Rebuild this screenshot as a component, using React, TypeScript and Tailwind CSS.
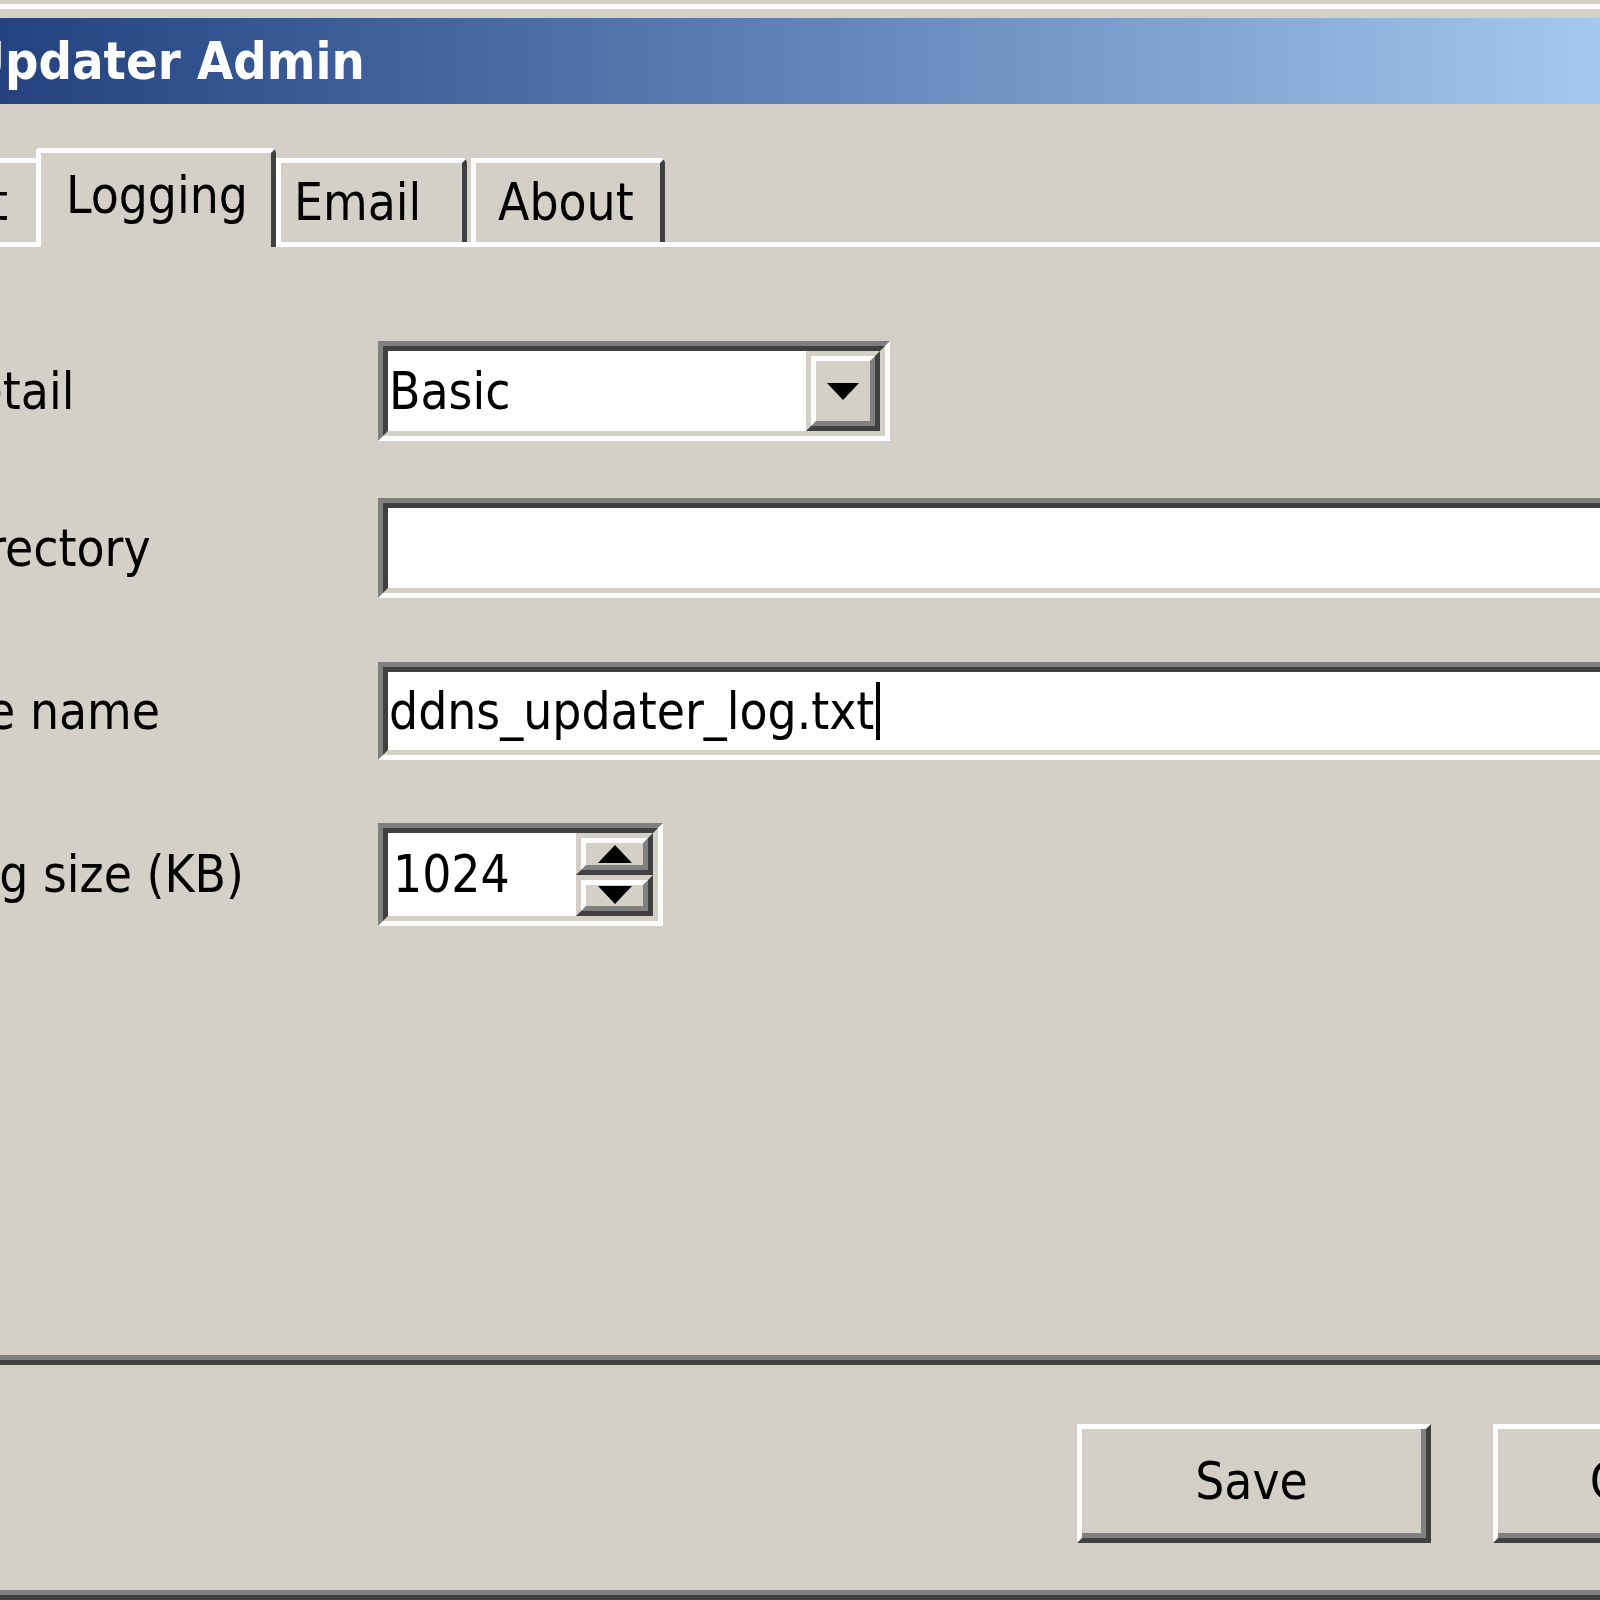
import React from 'react';

const FONT = "font-['DejaVu_Sans_Condensed','DejaVu_Sans','Liberation_Sans',sans-serif]";

function Sunken({ className, children }: { className: string; children?: React.ReactNode }) {
  return (
    <div
      className={`border-t-[5px] border-l-[5px] border-b-[5px] border-r-[5px] border-t-[#808080] border-l-[#808080] border-b-white border-r-white ${className}`}
    >
      <div className="h-full flex items-center bg-white border-t-[5px] border-l-[5px] border-b-[5px] border-r-[5px] border-t-[#404040] border-l-[#404040] border-b-[#d4d0c8] border-r-[#d4d0c8]">
        {children}
      </div>
    </div>
  );
}

function Raised({ className, children }: { className: string; children?: React.ReactNode }) {
  return (
    <div
      className={`bg-[#d4d0c8] border-t-[5px] border-l-[5px] border-b-[5px] border-r-[5px] border-t-[#d4d0c8] border-l-[#d4d0c8] border-b-[#404040] border-r-[#404040] ${className}`}
    >
      <div className="h-full flex items-center justify-center border-t-[5px] border-l-[5px] border-b-[5px] border-r-[5px] border-t-white border-l-white border-b-[#808080] border-r-[#808080]">
        {children}
      </div>
    </div>
  );
}

function Tab({ label, width, pad }: { label: string; width: string; pad: string }) {
  return (
    <div className={`flex flex-col ${width}`}>
      <div className={`h-[84px] flex items-center whitespace-nowrap rounded-tr-[5px] border-t-[5px] border-l-[5px] border-r-[5px] border-t-white border-l-white border-r-[#404040] ${pad}`}>
        {label}
      </div>
      <div className="h-[5px] bg-white" />
    </div>
  );
}

function Row({ label, height, children }: { label: string; height: string; children: React.ReactNode }) {
  return (
    <div className={`flex items-center ${height}`}>
      <div className="w-[529px] ml-[-151px] shrink-0 whitespace-nowrap">{label}</div>
      {children}
    </div>
  );
}

function Button({ label, className }: { label: string; className: string }) {
  return (
    <div className={`w-[354px] h-full shrink-0 border-t-[5px] border-l-[5px] border-b-[5px] border-r-[5px] border-t-white border-l-white border-b-[#404040] border-r-[#404040] ${className}`}>
      <div className="h-full flex items-center justify-center border-b-[5px] border-r-[5px] border-b-[#808080] border-r-[#808080]">
        {label}
      </div>
    </div>
  );
}

export default function App() {
  return (
    <div className={`w-[1600px] h-[1600px] overflow-hidden bg-[#d4d0c8] flex flex-col text-black text-[51px] leading-none ${FONT}`}>
      {/* window frame */}
      <div className="h-[4px] shrink-0" />
      <div className="h-[5px] shrink-0 bg-white" />
      <div className="h-[9px] shrink-0" />

      {/* caption */}
      <div className="h-[86px] shrink-0 flex items-center overflow-hidden bg-linear-to-r from-[#23427f] to-[#a4c8ef]">
        <span className="ml-[-33px] text-white font-bold text-[52px] whitespace-nowrap">Updater Admin</span>
      </div>

      <div className="h-[44px] shrink-0" />

      {/* tabs */}
      <div className="h-[99px] shrink-0 flex items-end">
        <div className="flex flex-col w-[36px]">
          <div className="h-[84px] flex items-center justify-end overflow-hidden whitespace-nowrap pr-[28px] border-t-[5px] border-t-white">
            Account
          </div>
          <div className="h-[5px] bg-white" />
        </div>
        <div className="w-[240px] h-[99px] flex items-center whitespace-nowrap pl-[25px] pb-[10px] rounded-tl-[4px] rounded-tr-[5px] border-t-[5px] border-l-[5px] border-r-[5px] border-t-white border-l-white border-r-[#404040]">
          Logging
        </div>
        <Tab label="Email" width="w-[191px]" pad="pl-[13px]" />
        <div className="w-[4px] h-[5px] bg-white" />
        <Tab label="About" width="w-[194px]" pad="pl-[22px]" />
        <div className="flex-1 h-[5px] bg-white" />
      </div>

      {/* tab page */}
      <div className="h-[94px] shrink-0" />
      <Row label="Log detail" height="h-[100px]">
        <Sunken className="w-[512px] h-full">
          <span className="flex-1 pl-[1px]">Basic</span>
          <Raised className="w-[74px] h-full">
            <svg width="32" height="17" viewBox="0 0 32 17">
              <polygon points="0,0 32,0 16,17" fill="#000" />
            </svg>
          </Raised>
        </Sunken>
      </Row>
      <div className="h-[57px] shrink-0" />
      <Row label="Log directory" height="h-[100px]">
        <Sunken className="w-[1300px] shrink-0 h-full" />
      </Row>
      <div className="h-[64px] shrink-0" />
      <Row label="Log file name" height="h-[98px]">
        <Sunken className="w-[1300px] shrink-0 h-full">
          <span className="pl-[1px] whitespace-nowrap">ddns_updater_log.txt</span>
          <span className="ml-[2px] w-[4px] h-[58px] bg-black" />
        </Sunken>
      </Row>
      <div className="h-[63px] shrink-0" />
      <Row label="Max log size (KB)" height="h-[103px]">
        <Sunken className="w-[285px] h-full">
          <span className="flex-1 pl-[5px]">1024</span>
          <div className="w-[77px] h-full flex flex-col">
            <Raised className="flex-1">
              <svg width="34" height="18" viewBox="0 0 34 18">
                <polygon points="17,0 34,18 0,18" fill="#000" />
              </svg>
            </Raised>
            <Raised className="flex-1">
              <svg width="34" height="18" viewBox="0 0 34 18">
                <polygon points="0,0 34,0 17,18" fill="#000" />
              </svg>
            </Raised>
          </div>
        </Sunken>
      </Row>
      <div className="flex-1" />

      {/* tab control bottom edge */}
      <div className="h-[5px] shrink-0 bg-[#808080]" />
      <div className="h-[5px] shrink-0 bg-[#404040]" />

      <div className="h-[59px] shrink-0" />
      <div className="h-[119px] shrink-0 flex">
        <Button label="Save" className="ml-[1077px]" />
        <Button label="Cancel" className="ml-[62px]" />
      </div>
      <div className="h-[47px] shrink-0" />
      <div className="h-[5px] shrink-0 bg-[#808080]" />
      <div className="h-[5px] shrink-0 bg-[#404040]" />
    </div>
  );
}
